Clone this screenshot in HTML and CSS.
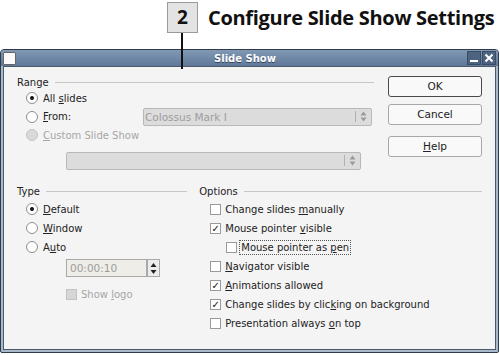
FILE: index.html
```html
<html>
<head>
<meta http-equiv="Content-Type" content="text/html; charset=utf-8" />
<link rel="stylesheet" href="styles.css">
</head>
<body>
<div class="callout">
    <div class="stepNum">2</div>
    <div class="stepTitle">Configure Slide Show Settings</div>
</div>
<div class="pointer"></div>
<div class="window">
    <div class="titleBar">
        <div class="winIcon"></div>
        <div class="winTitle">Slide Show</div>
        <div class="winBtn">
            <svg width="12" height="12" viewBox="0 0 12 12"><rect x="2" y="8" width="8" height="2" fill="#fff"/></svg>
        </div>
        <div class="winBtn">
            <svg width="12" height="12" viewBox="0 0 12 12"><path d="M2.5 2.5 L9.5 9.5 M9.5 2.5 L2.5 9.5" stroke="#fff" stroke-width="2"/></svg>
        </div>
    </div>
    <div class="dialog">
        <div class="topRow">
            <div class="group rangeGroup">
                <div class="legend"><span>Range</span></div>
                <div class="row"><span class="radio on"></span><span>All <u>s</u>lides</span></div>
                <div class="row">
                    <span class="radio"></span><span class="fromLabel"><u>F</u>rom:</span>
                    <div class="combo fromCombo">
                        <span class="comboText">Colossus Mark I</span>
                        <span class="spinSep"></span>
                        <svg class="spinArrows" width="7" height="11" viewBox="0 0 7 11"><path d="M0.5 4.5 L3.5 0.5 L6.5 4.5 Z M0.5 6.5 L3.5 10.5 L6.5 6.5 Z" fill="#9a9a9a"/></svg>
                    </div>
                </div>
                <div class="row disabled"><span class="radio off"></span><span><u>C</u>ustom Slide Show</span></div>
                <div class="combo customCombo">
                    <span class="comboText"></span>
                    <span class="spinSep"></span>
                    <svg class="spinArrows" width="7" height="11" viewBox="0 0 7 11"><path d="M0.5 4.5 L3.5 0.5 L6.5 4.5 Z M0.5 6.5 L3.5 10.5 L6.5 6.5 Z" fill="#9a9a9a"/></svg>
                </div>
            </div>
            <div class="buttons">
                <div class="btn defaultBtn">OK</div>
                <div class="btn">Cancel</div>
                <div class="btn helpBtn"><u>H</u>elp</div>
            </div>
        </div>
        <div class="bottomRow">
            <div class="group typeGroup">
                <div class="legend"><span>Type</span></div>
                <div class="row first"><span class="radio on"></span><span><u>D</u>efault</span></div>
                <div class="row"><span class="radio"></span><span><u>W</u>indow</span></div>
                <div class="row"><span class="radio"></span><span>A<u>u</u>to</span></div>
                <div class="timeField">
                    <div class="timeText">00:00:10</div>
                    <div class="timeSpin">
                        <svg width="7" height="13" viewBox="0 0 7 13"><path d="M0.5 5 L3.5 1 L6.5 5 Z M0.5 8 L3.5 12 L6.5 8 Z" fill="#222"/></svg>
                    </div>
                </div>
                <div class="row disabled logoRow"><span class="check off"></span><span>Show <u>l</u>ogo</span></div>
            </div>
            <div class="group optGroup">
                <div class="legend"><span>Options</span></div>
                <div class="row first"><span class="check"></span><span>Change slides <u>m</u>anually</span></div>
                <div class="row"><span class="check">&#10003;</span><span>Mouse pointer <u>v</u>isible</span></div>
                <div class="row sub"><span class="check"></span><span class="focus">Mouse pointer as <u>p</u>en</span></div>
                <div class="row"><span class="check"></span><span><u>N</u>avigator visible</span></div>
                <div class="row"><span class="check">&#10003;</span><span><u>A</u>nimations allowed</span></div>
                <div class="row"><span class="check">&#10003;</span><span>Change slides by clic<u>k</u>ing on background</span></div>
                <div class="row"><span class="check"></span><span>Presentation always <u>o</u>n top</span></div>
            </div>
        </div>
    </div>
</div>
</body>
</html>
```
FILE: styles.css
```css
* {
    box-sizing: border-box;
}
html {
    background-color: #fff;
}
body {
    margin: 0;
    width: 500px;
    height: 355px;
    position: relative;
    font: 10px 'DejaVu Sans', sans-serif;
    color: #222;
}
.callout {
    display: flex;
    align-items: center;
    padding: 2px 0 0 167px;
    height: 33px;
}
.stepNum {
    width: 31px;
    height: 31px;
    border: 1px solid #9a9a9a;
    background-color: #e3e3e3;
    font: bold 19px 'Open Sans', sans-serif;
    color: #111;
    text-align: center;
    line-height: 28px;
}
.stepTitle {
    margin-left: 10px;
    font: bold 20px 'Open Sans', sans-serif;
    letter-spacing: -0.3px;
    color: #111;
}
.pointer {
    position: absolute;
    left: 181px;
    top: 33px;
    width: 2px;
    height: 36px;
    background-color: #111;
    z-index: 2;
}
.window {
    margin: 16px 1px 0 0;
    border: 1px solid #2e3b4b;
    border-radius: 4px 4px 2px 2px;
    background-color: #a9b9ca;
    padding: 0 2px 2px;
}
.titleBar {
    height: 16px;
    display: flex;
    align-items: center;
    background: linear-gradient(#8199b5, #5f7898);
    margin: 0 -2px;
    padding: 0 2px;
    border-radius: 3px 3px 0 0;
}
.winIcon {
    width: 13px;
    height: 13px;
    background-color: #fafafa;
    border: 1px solid #666;
    border-radius: 1px;
}
.winTitle {
    flex: 1;
    text-align: center;
    color: #fff;
    font-weight: bold;
    font-size: 10px;
    text-shadow: 0 1px 0 #34465c;
    padding-left: 8px;
}
.winBtn {
    width: 14px;
    height: 14px;
    margin-left: 1px;
    background-color: #4d6380;
    border: 1px solid #3a4c64;
    display: flex;
}
.dialog {
    border: 1px solid #4b5a6b;
    background-color: #f4f4f4;
    height: 284px;
    padding: 8px 13px 0;
}
.topRow {
    display: flex;
}
.rangeGroup {
    width: 357px;
}
.legend {
    height: 14px;
    display: flex;
    align-items: center;
}
.legend::after {
    content: "";
    flex: 1;
    height: 1px;
    background-color: #c7c7c7;
    margin-left: 6px;
}
.row {
    height: 18.5px;
    display: flex;
    align-items: center;
    padding-left: 9px;
    white-space: nowrap;
}
.radio {
    width: 12px;
    height: 12px;
    border: 1px solid #8e8e8e;
    border-radius: 50%;
    background-color: #fff;
    margin-right: 5px;
    position: relative;
    flex: none;
}
.radio.on::after {
    content: "";
    position: absolute;
    left: 3px;
    top: 3px;
    width: 4px;
    height: 4px;
    border-radius: 50%;
    background-color: #111;
}
.radio.off {
    background-color: #d9d9d9;
    border-color: #c4c4c4;
}
.disabled {
    color: #a6a6a6;
}
.fromLabel {
    width: 100px;
}
.combo {
    height: 18px;
    border: 1px solid #b8b8b8;
    border-radius: 2px;
    background-color: #dcdcdc;
    display: flex;
    align-items: center;
    color: #9c9c9c;
    font-size: 10.5px;
}
.comboText {
    flex: 1;
    padding-left: 1px;
}
.spinSep {
    width: 1px;
    height: 11px;
    background-color: #b0b0b0;
    margin-right: 4px;
}
.spinArrows {
    margin-right: 4px;
}
.fromCombo {
    width: 229px;
}
.customCombo {
    margin: 7px 0 0 49px;
    width: 295px;
}
.buttons {
    margin-left: 14px;
    padding-top: 1px;
    display: flex;
    flex-direction: column;
}
.btn {
    width: 94px;
    height: 21px;
    border: 1px solid #a8a8a8;
    border-radius: 3px;
    background-color: #f9f9f9;
    text-align: center;
    line-height: 19px;
    font-size: 10.5px;
    margin-bottom: 7px;
}
.defaultBtn {
    border-color: #4a4a4a;
}
.helpBtn {
    margin-top: 4px;
}
.bottomRow {
    display: flex;
    margin-top: 15px;
}
.typeGroup {
    width: 171px;
}
.optGroup {
    margin-left: 12px;
    width: 284px;
}
.bottomRow .row {
    height: 19px;
}
.bottomRow .row.first {
    margin-top: 1px;
}
.optGroup .row {
    padding-left: 11px;
}
.check {
    width: 11px;
    height: 11px;
    border: 1px solid #9a9a9a;
    background-color: #fff;
    margin-right: 4px;
    flex: none;
    font-size: 10px;
    line-height: 9px;
    text-align: center;
    color: #111;
}
.check.off {
    background-color: #d6d6d6;
    border-color: #c2c2c2;
}
.optGroup .row.sub {
    padding-left: 27px;
}
.focus {
    border: 1px dotted #555;
    padding: 0 1px;
    margin-left: -2px;
    line-height: 13px;
}
.timeField {
    display: flex;
    margin: 2.5px 0 0 49px;
    height: 18px;
}
.timeText {
    width: 81px;
    border: 1px solid #a9a9a9;
    background-color: #efede8;
    color: #9c9c9c;
    line-height: 16px;
    padding-left: 3px;
    font-size: 10.5px;
}
.timeSpin {
    width: 13px;
    border: 1px solid #a9a9a9;
    background-color: #ececec;
    display: flex;
    align-items: center;
    justify-content: center;
}
.bottomRow .row.logoRow {
    margin-top: 8px;
    padding-left: 49px;
}
```
